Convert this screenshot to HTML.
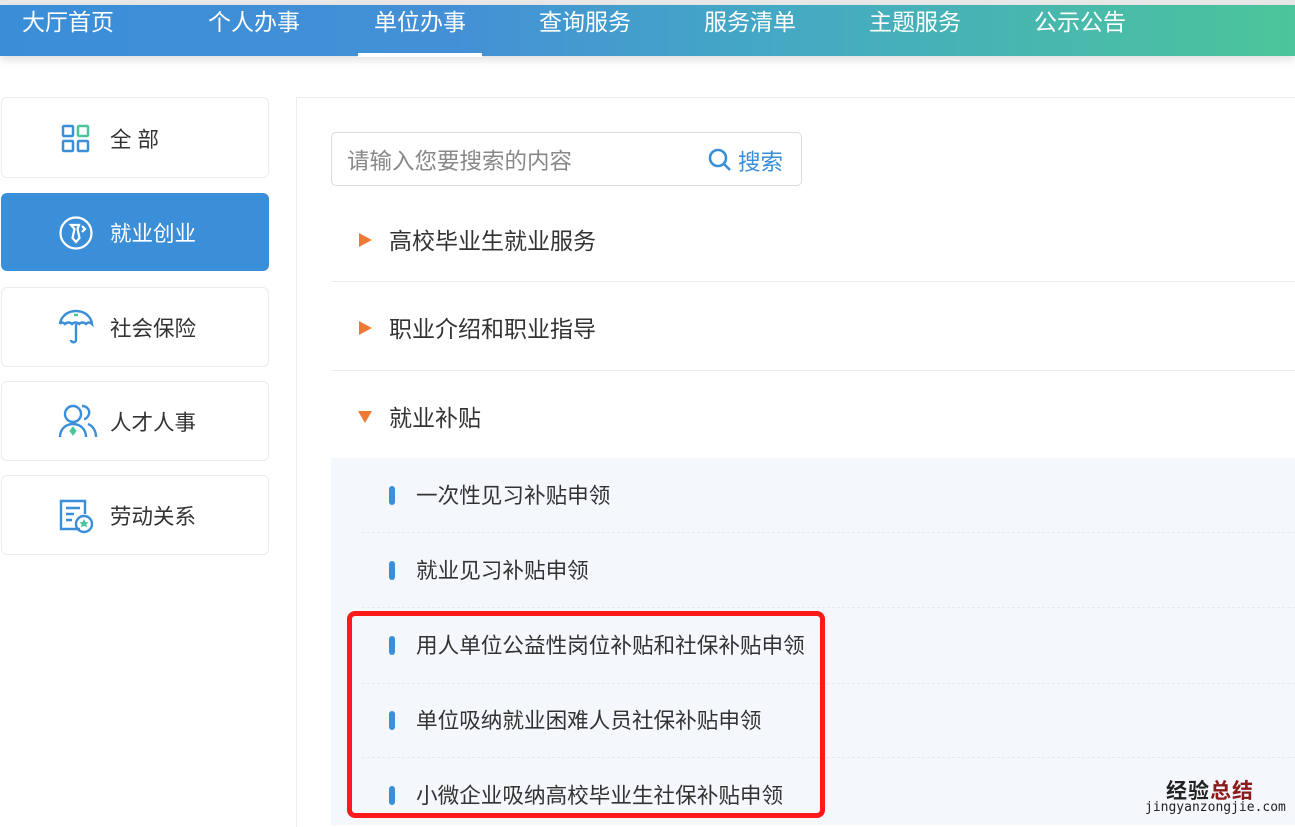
<!DOCTYPE html>
<html><head><meta charset="utf-8"><style>
*{margin:0;padding:0;box-sizing:border-box}
body{width:1295px;height:825px;overflow:hidden;background:#fff;font-family:"Liberation Sans","Noto Sans CJK SC",sans-serif;position:relative}
.top{position:absolute;left:0;top:0;width:1295px;height:5px;background:#e8e8e8}
.nav{position:absolute;left:0;top:5px;width:1295px;height:51px;background:linear-gradient(90deg,#3a8ed8 0%,#4490d6 35%,#44a9c4 60%,#4cc59a 100%);box-shadow:0 4px 8px rgba(0,0,0,.12)}
.nav span{position:absolute;top:1px;color:#fff;font-size:23px;line-height:32px}
.nav .ul{position:absolute;left:358px;top:48px;width:124px;height:4px;background:#fff}
.card{position:absolute;left:1px;width:268px;border:1px solid #ececec;border-radius:6px;background:#fff;font-size:21.5px;color:#333}
.card svg{position:absolute;left:56px}
.card span{position:absolute;left:108px}
.card.on{background:#3b8ed8;border-color:#3b8ed8;color:#fff}
.panel{position:absolute;left:296px;top:97px;width:1000px;height:730px;border-left:1px solid #ececec;border-top:1px solid #ececec}
.search{position:absolute;left:331px;top:132px;width:471px;height:54px;border:1px solid #dcdcdc;border-radius:5px}
.search .ph{position:absolute;left:15px;top:11px;font-size:22.5px;color:#888}
.search .bt{position:absolute;left:406px;top:12px;font-size:22.5px;color:#3b8ed8}
.row{position:absolute;left:331px;width:964px;border-bottom:1px solid #ececec;font-size:23px;color:#333}
.tri{position:absolute;left:359px;width:0;height:0}
.sub{position:absolute;left:331px;top:458px;width:964px;height:367px;background:#f4f8fd}
.it{position:absolute;left:416px;font-size:21.6px;color:#333}
.bar{position:absolute;left:389px;width:6px;height:19px;border-radius:3px;background:#3b8ed8}
.dash{position:absolute;left:362px;width:933px;border-top:1px dashed #e6e9ee}
.red{position:absolute;left:347px;top:611px;width:478px;height:207px;border:5px solid #ff1a1a;border-radius:8px}
</style></head><body>
<div class="top"></div>
<div class="nav">
<span style="left:22px">大厅首页</span><span style="left:208px">个人办事</span><span style="left:374px">单位办事</span><span style="left:539px">查询服务</span><span style="left:704px">服务清单</span><span style="left:869px">主题服务</span><span style="left:1034px">公示公告</span>
<div class="ul"></div></div>

<div class="card" style="top:97px;height:81px"><svg style="top:24px" width="34" height="34" viewBox="0 0 34 34" fill="none" stroke-width="2.5"><rect x="5" y="4" width="10" height="10" rx="1" stroke="#3b8ed8"/><rect x="20" y="4" width="10" height="10" rx="1" stroke="#4cc59a"/><rect x="5" y="19" width="10" height="10" rx="1" stroke="#3b8ed8"/><rect x="20" y="19" width="10" height="10" rx="1" stroke="#3b8ed8"/></svg><span style="top:25px">全 部</span></div>
<div class="card on" style="top:193px;height:78px"><svg style="top:21px" width="36" height="36" viewBox="0 0 36 36" fill="none" stroke="#fff" stroke-width="2.2"><circle cx="18" cy="18" r="15.5"/><path d="M13 10h8l-1.5 4 2 9-3.5 4-3.5-4 2-9z"/><path d="M24 11l3 3-3 3"/></svg><span style="top:23px">就业创业</span></div>
<div class="card" style="top:287px;height:80px"><svg style="top:20px" width="36" height="38" viewBox="0 0 36 38" fill="none" stroke="#3b8ed8" stroke-width="2.4"><path d="M2 16C3 8 10 3 18 3s15 5 16 13c-2-2-4-2-6 0-2-2-5-2-7 0-2-2-5-2-7 0-2-2-5-2-7 0-2-2-4-2-5 0z"/><path d="M18 16v16c0 3-5 3-5 0"/><path d="M16 7h4" stroke="#4cc59a"/></svg><span style="top:24px">社会保险</span></div>
<div class="card" style="top:381px;height:80px"><svg style="top:20px" width="40" height="38" viewBox="0 0 40 38" fill="none" stroke="#3b8ed8" stroke-width="2.4"><circle cx="15" cy="12" r="8"/><path d="M2 35c0-8 6-13 13-13s13 5 13 13"/><path d="M24 4c5 0 8 4 7 8-1 3-3 5-5 5"/><path d="M30 22c5 2 8 7 8 13"/><path d="M15 25l3 4-3 4-3-4z" fill="#4cc59a" stroke="#4cc59a" stroke-width="1"/></svg><span style="top:24px">人才人事</span></div>
<div class="card" style="top:475px;height:80px"><svg style="top:22px" width="38" height="36" viewBox="0 0 38 36" fill="none" stroke="#3b8ed8" stroke-width="2.4"><path d="M22 31H3V3h24v13"/><path d="M8 10h14M8 16h8M8 22h6"/><circle cx="26" cy="26" r="8"/><path d="M26 21l1.5 3 3 .4-2.2 2 .6 3-2.9-1.5-2.9 1.5.6-3-2.2-2 3-.4z" fill="#4cc59a" stroke="none"/></svg><span style="top:24px">劳动关系</span></div>

<div class="panel"></div>
<div class="search"><span class="ph">请输入您要搜索的内容</span><svg style="position:absolute;left:375px;top:14px" width="26" height="26" viewBox="0 0 26 26" fill="none" stroke="#3b8ed8" stroke-width="2.6"><circle cx="11" cy="11" r="8"/><path d="M17 17l6 6"/></svg><span class="bt">搜索</span></div>

<div class="row" style="top:200px;height:82px"><span style="position:absolute;left:58px;top:22px">高校毕业生就业服务</span></div>
<div class="tri" style="top:233px;border-left:13px solid #ee7a35;border-top:7px solid transparent;border-bottom:7px solid transparent"></div>
<div class="row" style="top:282px;height:89px"><span style="position:absolute;left:58px;top:28px">职业介绍和职业指导</span></div>
<div class="tri" style="top:321px;border-left:13px solid #ee7a35;border-top:7px solid transparent;border-bottom:7px solid transparent"></div>
<div class="row" style="top:371px;height:87px;border:none"><span style="position:absolute;left:58px;top:28px">就业补贴</span></div>
<div class="tri" style="left:358px;top:411px;border-top:12px solid #ee7a35;border-left:7px solid transparent;border-right:7px solid transparent"></div>

<div class="sub"></div>
<div class="bar" style="top:486px"></div><div class="it" style="top:479px">一次性见习补贴申领</div>
<div class="dash" style="top:532px"></div>
<div class="bar" style="top:561px"></div><div class="it" style="top:554px">就业见习补贴申领</div>
<div class="dash" style="top:607px"></div>
<div class="bar" style="top:636px"></div><div class="it" style="top:629px">用人单位公益性岗位补贴和社保补贴申领</div>
<div class="dash" style="top:683px"></div>
<div class="bar" style="top:711px"></div><div class="it" style="top:704px">单位吸纳就业困难人员社保补贴申领</div>
<div class="dash" style="top:757px"></div>
<div class="bar" style="top:786px"></div><div class="it" style="top:779px">小微企业吸纳高校毕业生社保补贴申领</div>
<div class="red"></div>
<div style="position:absolute;left:1166px;top:775px;font-size:21px;font-weight:bold;color:#222;letter-spacing:1px">经验<span style="color:#8b1a1a">总结</span></div>
<div style="position:absolute;left:1145px;top:800px;font-size:13px;color:#222;font-family:'DejaVu Sans Mono',monospace">jingyanzongjie.com</div>
</body></html>
